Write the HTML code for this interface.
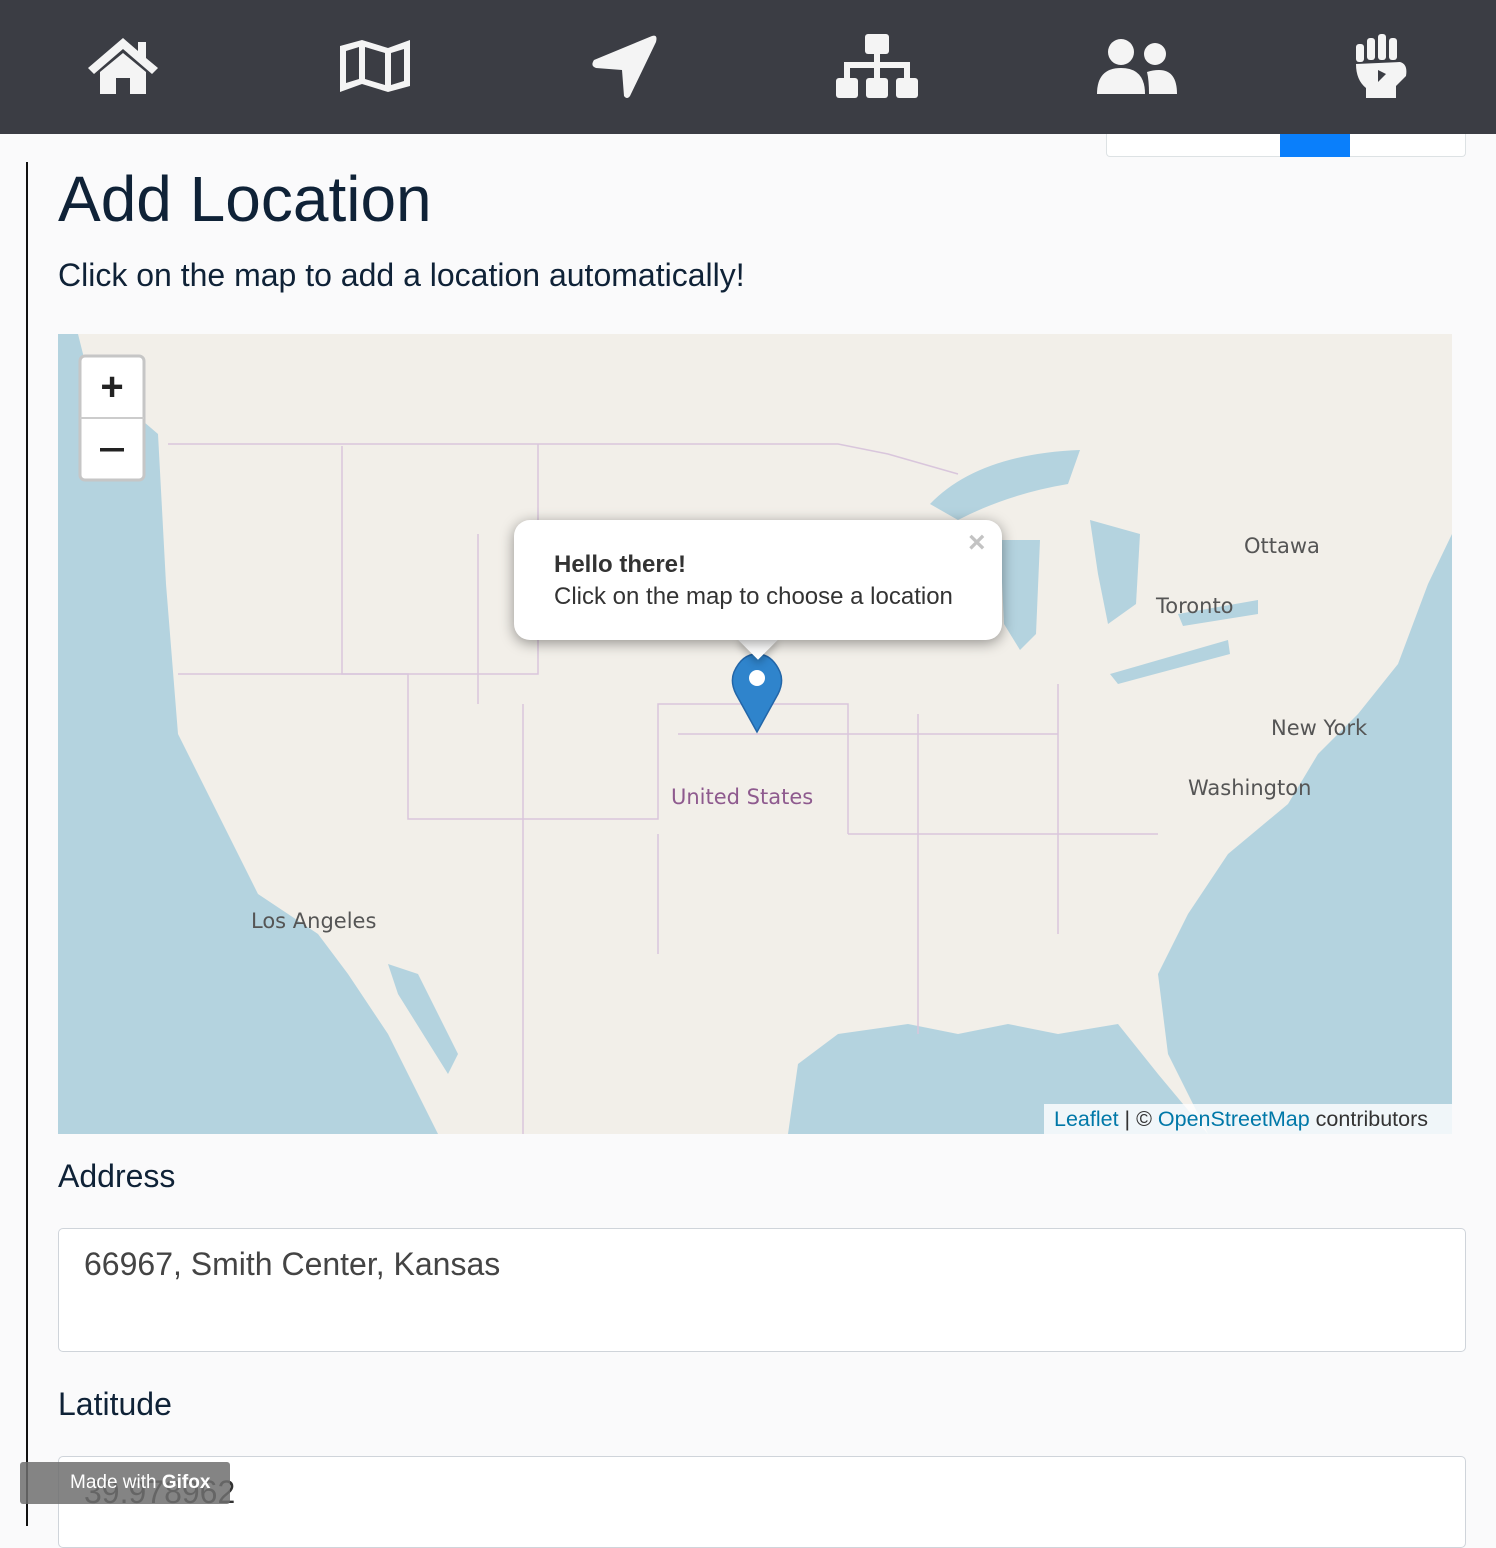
<!DOCTYPE html>
<html><head><meta charset="utf-8"><style>
body{margin:0;width:1496px;height:1526px;overflow:hidden;background:#fafafb;font-family:"Liberation Sans",sans-serif;position:relative}
.nav{position:absolute;left:0;top:0;width:1496px;height:134px;background:#3b3d44}
.nav svg{position:absolute;fill:#f4f4f4}
.abs{position:absolute}
</style></head><body>
<div class="nav">
<svg style="left:86px;top:36px" width="74" height="60" viewBox="0 0 74 60"><path d="M37 2 L2 32 L8 38 L37 13 L66 38 L72 32 L60 22 L60 6 L52 6 L52 15 Z"/><path d="M14 36 L37 17 L60 36 L60 58 L44 58 L44 42 L30 42 L30 58 L14 58 Z"/></svg>
<svg style="left:338px;top:38px" width="74" height="56" viewBox="0 0 74 56"><path d="M2 8 L24 2 L50 10 L72 2 L72 48 L50 54 L24 46 L2 54 Z M8 13 L8 45 L21 41 L21 9 Z M27 9 L27 41 L47 47 L47 15 Z M53 15 L53 47 L66 43 L66 11 Z" fill-rule="evenodd"/></svg>
<svg style="left:590px;top:34px" width="68" height="66" viewBox="0 0 68 66"><path d="M62 2 Q68 0 66 8 L40 62 Q37 66 34 62 L32 36 L6 34 Q0 32 4 26 Z"/></svg>
<svg style="left:836px;top:34px" width="82" height="66" viewBox="0 0 82 66"><rect x="29" y="0" width="24" height="20" rx="3"/><rect x="38" y="20" width="6" height="12"/><rect x="8" y="28" width="66" height="6"/><rect x="8" y="28" width="6" height="16"/><rect x="68" y="28" width="6" height="16"/><rect x="38" y="28" width="6" height="16"/><rect x="0" y="44" width="22" height="20" rx="3"/><rect x="30" y="44" width="22" height="20" rx="3"/><rect x="60" y="44" width="22" height="20" rx="3"/></svg>
<svg style="left:1097px;top:38px" width="80" height="56" viewBox="0 0 80 56"><circle cx="24" cy="14" r="13"/><path d="M0 56 Q0 30 24 30 Q48 30 48 56 Z"/><circle cx="58" cy="16" r="11"/><path d="M50 34 Q56 32 62 32 Q80 32 80 56 L52 56 Q52 42 50 34 Z"/></svg>
<svg style="left:1356px;top:34px" width="52" height="66" viewBox="0 0 52 66"><rect x="0" y="10" width="8" height="18" rx="3"/><rect x="11" y="4" width="8" height="22" rx="3"/><rect x="22" y="0" width="8" height="26" rx="3"/><rect x="33" y="4" width="8" height="22" rx="3"/><path d="M0 30 L44 28 Q52 30 50 42 L40 52 L40 64 L10 64 L10 54 Q0 46 0 30 Z M22 36 L30 40 L22 48 Z" fill-rule="evenodd"/></svg>
</div>
<div class="abs" style="left:1106px;top:134px;width:358px;height:22px;border:1px solid #dde2e4;border-top:none;background:#fff;border-radius:0 0 4px 4px"></div>
<div class="abs" style="left:1280px;top:134px;width:70px;height:23px;background:#0a7ffb"></div>
<div class="abs" style="left:26px;top:162px;width:2px;height:1364px;background:#111"></div>
<div class="abs" style="left:58px;top:162px;font-size:64px;color:#0f2237">Add Location</div>
<div class="abs" style="left:58px;top:257px;font-size:32px;color:#0f2237">Click on the map to add a location automatically!</div>
<svg class="abs" style="left:58px;top:334px" width="1394" height="800" viewBox="0 0 1394 800">
<rect width="1394" height="800" fill="#f2efe9"/>
<g fill="#b4d3df">
<path d="M0 0 L20 0 L30 40 L100 100 L108 250 L120 400 L180 520 L200 560 L260 600 L290 640 L330 700 L360 760 L380 800 L0 800 Z"/>
<path d="M730 800 L740 730 L780 700 L850 690 L900 700 L950 690 L1000 700 L1060 690 L1100 740 L1150 800 Z"/>
<path d="M1394 100 L1394 800 L1150 800 L1110 720 L1100 640 L1130 580 L1170 520 L1230 470 L1260 420 L1300 380 L1340 330 L1370 250 L1394 200 Z"/>
<path d="M872 170 Q920 120 1022 116 L1010 150 Q950 160 900 186 Z"/>
<path d="M942 206 L982 206 L978 300 L962 316 L946 290 Z"/>
<path d="M1032 186 L1082 200 L1078 270 L1050 290 L1040 240 Z"/>
<path d="M1052 340 L1170 306 L1172 320 L1060 350 Z"/>
<path d="M1120 280 L1200 266 L1200 280 L1125 292 Z"/>
<path d="M330 630 L360 640 L400 720 L390 740 L340 660 Z"/>
</g>
<g stroke="#d9c6dc" stroke-width="1.5" fill="none">
<path d="M110 110 L780 110 L830 120 L900 140"/><path d="M284 112 L284 340 L480 340 L480 110"/><path d="M120 340 L350 340 L350 485 L600 485 L600 370 L790 370 L790 500"/><path d="M465 370 L465 800"/><path d="M600 500 L600 620"/><path d="M420 200 L420 370"/><path d="M790 500 L1100 500"/><path d="M860 380 L860 700"/><path d="M1000 350 L1000 600"/><path d="M620 400 L1000 400"/>
</g>
<g font-family="DejaVu Sans,sans-serif" font-size="21" fill="#555">
<text x="1186" y="219">Ottawa</text><text x="1098" y="279">Toronto</text><text x="1213" y="401">New York</text><text x="1130" y="461">Washington</text><text x="193" y="594">Los Angeles</text><text x="613" y="470" fill="#8e5a8e">United States</text>
</g>
<path d="M699 398 L678 360 Q672 348 676 338 Q684 320 699 320 Q714 320 722 338 Q726 348 720 360 Z" fill="#2f84cc" stroke="#2366a8" stroke-width="1.5"/>
<circle cx="699" cy="344" r="8" fill="#fff"/>
<g transform="translate(22 22)"><rect width="64" height="124" rx="5" fill="#fff" stroke="#c6c6c6" stroke-width="3"/><line x1="0" y1="62" x2="64" y2="62" stroke="#ccc" stroke-width="2"/><text x="32" y="44" text-anchor="middle" font-size="40" font-family="Liberation Sans" font-weight="bold" fill="#222">+</text><rect x="20" y="92" width="24" height="3.5" fill="#222"/></g>
</svg>
<div class="abs" style="left:744px;top:626px;width:28px;height:28px;background:#fff;transform:rotate(45deg);box-shadow:3px 3px 8px rgba(0,0,0,.25)"></div>
<div class="abs" style="left:514px;top:520px;width:488px;height:120px;background:#fff;border-radius:16px;box-shadow:0 3px 14px rgba(0,0,0,.4)"></div>
<div class="abs" style="left:744px;top:620px;width:30px;height:20px;background:#fff"></div>
<div class="abs" style="left:968px;top:526px;font-size:30px;color:#c3c3c3;font-weight:bold">×</div>
<div class="abs" style="left:554px;top:549px;font-size:24px;color:#333;line-height:32px"><b>Hello there!</b><br>Click on the map to choose a location</div>
<div class="abs" style="left:1044px;top:1104px;width:398px;height:30px;padding-left:10px;background:rgba(255,255,255,.8);font-size:21.5px;line-height:30px;color:#333"><span style="color:#0078a8">Leaflet</span> | © <span style="color:#0078a8">OpenStreetMap</span> contributors</div>
<div class="abs" style="left:58px;top:1158px;font-size:32px;color:#0f2237">Address</div>
<div class="abs" style="left:58px;top:1228px;width:1406px;height:122px;border:1.5px solid #cfd4da;border-radius:5px;background:#fff"></div>
<div class="abs" style="left:84px;top:1246px;font-size:32px;color:#444">66967, Smith Center, Kansas</div>
<div class="abs" style="left:58px;top:1386px;font-size:32px;color:#0f2237">Latitude</div>
<div class="abs" style="left:58px;top:1456px;width:1406px;height:90px;border:1.5px solid #cfd4da;border-radius:5px;background:#fff"></div>
<div class="abs" style="left:84px;top:1474px;font-size:32px;color:#333">39.978962</div>
<div class="abs" style="left:20px;top:1462px;width:210px;height:42px;background:rgba(110,110,110,.85);border-radius:3px;color:#fff;font-size:19px;line-height:42px;padding-left:50px;box-sizing:border-box">Made with <b>Gifox</b></div>
</body></html>
